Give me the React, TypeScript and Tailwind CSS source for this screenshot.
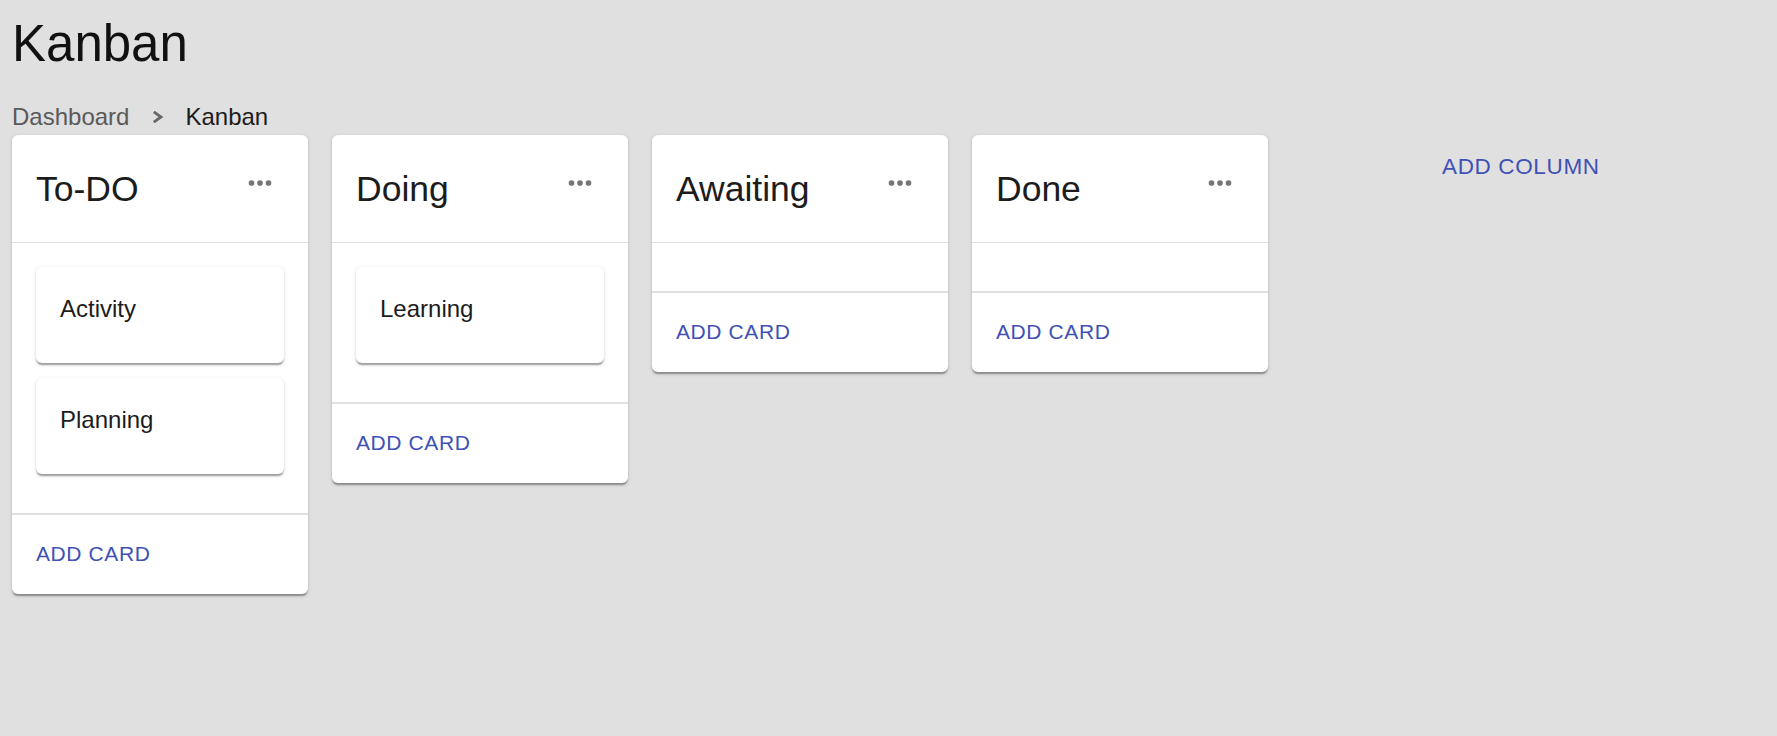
import React from "react";

const shadow =
  "shadow-[0_3px_1.5px_-1.5px_rgba(0,0,0,0.2),0_1.5px_1.5px_0_rgba(0,0,0,0.14),0_1.5px_4.5px_0_rgba(0,0,0,0.12)]";

type Column = { title: string; cards: string[] };

const columns: Column[] = [
  { title: "To-DO", cards: ["Activity", "Planning"] },
  { title: "Doing", cards: ["Learning"] },
  { title: "Awaiting", cards: [] },
  { title: "Done", cards: [] },
];

function MoreIcon() {
  return (
    <svg width="34" height="34" viewBox="0 0 24 24" fill="#757575">
      <circle cx="6" cy="12" r="2" />
      <circle cx="12" cy="12" r="2" />
      <circle cx="18" cy="12" r="2" />
    </svg>
  );
}

function BoardColumn({ column }: { column: Column }) {
  return (
    <div className={`w-[296px] shrink-0 rounded-[6px] bg-white ${shadow}`}>
      <div className="flex h-[108px] items-start justify-between border-b border-[#e0e0e0] pl-[24px] pr-[31px] pt-[31px]">
        <h2 className="mt-[2px] text-[35.5px] font-normal leading-[42px] text-[#1c1c1c]">
          {column.title}
        </h2>
        <button className="block">
          <MoreIcon />
        </button>
      </div>
      <div className="px-[24px] py-[24px]">
        {column.cards.map((card) => (
          <div
            key={card}
            className={`mb-[15px] rounded-[6px] bg-white px-[24px] pb-[36px] pt-[24px] text-[24px] leading-[36px] text-[#1c1c1c] ${shadow}`}
          >
            {card}
          </div>
        ))}
      </div>
      <div className="border-t-2 border-[#e0e0e0] p-[12px]">
        <button className="px-[12px] py-[9px] text-[21px] uppercase leading-[36.75px] tracking-[0.6px] text-[#3f51b5]">
          Add card
        </button>
      </div>
    </div>
  );
}

export default function App() {
  return (
    <div
      className="min-h-screen bg-[#e0e0e0] p-[12px] text-[#1c1c1c]"
      style={{ fontFamily: '"Liberation Sans", Arial, sans-serif' }}
    >
      <h1 className="text-[51px] font-normal leading-[63px] text-[#111]">Kanban</h1>
      <nav className="mt-[24px] flex items-center text-[24px] leading-[36px]">
        <span className="text-[#5a5a5a]">Dashboard</span>
        <span className="ml-[12px] mr-[14px] flex items-center">
          <svg width="30" height="30" viewBox="0 0 30 30" fill="none">
            <path
              d="M12.8 9.8 L20 15 L12.8 20.2"
              stroke="#666"
              strokeWidth="2.8"
              strokeLinejoin="miter"
            />
          </svg>
        </span>
        <span className="text-[#1c1c1c]">Kanban</span>
      </nav>
      <div className="flex items-start gap-[24px]">
        {columns.map((column) => (
          <BoardColumn key={column.title} column={column} />
        ))}
        <button className="ml-[117px] px-[33px] py-[12px] text-[22.5px] uppercase leading-[39.4px] tracking-[0.64px] text-[#3f51b5]">
          Add column
        </button>
      </div>
    </div>
  );
}
